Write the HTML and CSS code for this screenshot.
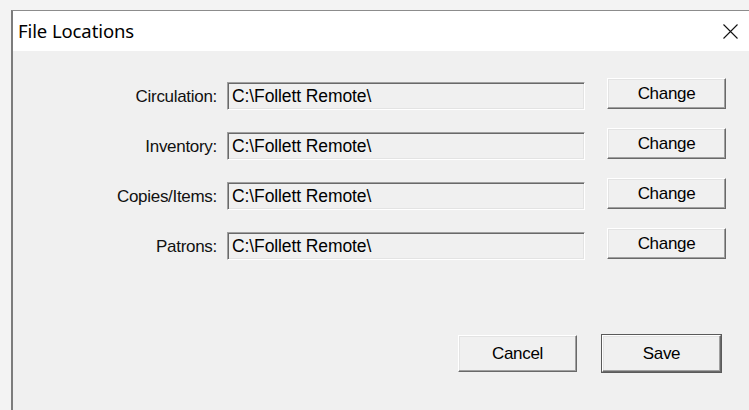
FILE: index.html
```html
<!DOCTYPE html>
<html>
<head>
<meta charset="utf-8">
<title>File Locations</title>
<link rel="stylesheet" href="styles.css">
</head>
<body>
<div class="window">
  <div class="titlebar">
    <span class="title">File Locations</span>
    <svg class="close" width="15" height="15" viewBox="0 0 15 15">
      <path d="M0.5 0.5 L14.5 14.5 M14.5 0.5 L0.5 14.5" stroke="#111" stroke-width="1.1" fill="none"/>
    </svg>
  </div>
  <div class="client">
    <div class="fields">
      <label class="label">Circulation:</label>
      <div class="path">C:\Follett Remote\</div>
      <button class="btn change">Change</button>

      <label class="label">Inventory:</label>
      <div class="path">C:\Follett Remote\</div>
      <button class="btn change">Change</button>

      <label class="label">Copies/Items:</label>
      <div class="path">C:\Follett Remote\</div>
      <button class="btn change">Change</button>

      <label class="label">Patrons:</label>
      <div class="path">C:\Follett Remote\</div>
      <button class="btn change">Change</button>
    </div>
    <div class="actions">
      <button class="btn action">Cancel</button>
      <button class="btn action default">Save</button>
    </div>
  </div>
</div>
</body>
</html>
```

FILE: styles.css
```css
html, body {
  margin: 0;
  padding: 0;
  overflow: hidden;
}

body {
  width: 749px;
  height: 410px;
  background: #f3f3f3;
  font-family: "Liberation Sans", Arial, sans-serif;
  color: #000;
}

.window {
  margin: 10px 0 0 11px;
  width: 738px;
  height: 400px;
  box-sizing: border-box;
  border-top: 1px solid #8c8c8c;
  border-left: 2px solid #7c7c7c;
  background: #f0f0f0;
  display: flex;
  flex-direction: column;
}

.titlebar {
  height: 40px;
  background: #fff;
  display: flex;
  align-items: center;
  justify-content: space-between;
  padding: 0 11px 0 5px;
  flex: none;
}

.title {
  font-family: "Noto Sans", "Open Sans", sans-serif;
  font-size: 18.5px;
  color: #000;
  padding-bottom: 1px;
  letter-spacing: -0.1px;
}

.close {
  display: block;
  margin-top: 1px;
}

.client {
  flex: 1;
  padding-top: 26px;
}

.fields {
  display: grid;
  grid-template-columns: 214px 358px 141px;
  grid-auto-rows: 31px;
  row-gap: 19px;
  align-items: start;
}

.label {
  font-size: 17px;
  letter-spacing: -0.3px;
  text-align: right;
  padding-right: 10px;
  line-height: 28px;
  margin-top: 6px;
  color: #111;
}

.path {
  height: 28px;
  margin-top: 5px;
  box-sizing: border-box;
  border: 1px solid;
  border-color: #a0a0a0 #fff #fff #a0a0a0;
  box-shadow: inset 1px 1px 0 #696969, inset -1px -1px 0 #e3e3e3;
  background: #f0f0f0;
  font-size: 17.5px;
  letter-spacing: -0.1px;
  line-height: 26px;
  padding-left: 4px;
  white-space: nowrap;
  overflow: hidden;
}

.btn {
  font-family: "Liberation Sans", Arial, sans-serif;
  font-size: 17px;
  letter-spacing: -0.3px;
  color: #000;
  background: #f0f0f0;
  border: 1px solid;
  border-color: #fff #696969 #696969 #fff;
  box-shadow: inset -1px -1px 0 #a0a0a0, inset 1px 1px 0 #e3e3e3;
  border-radius: 0;
  padding: 0;
  margin: 0;
  box-sizing: border-box;
}

.change {
  width: 119px;
  height: 31px;
  justify-self: end;
  margin-top: 1px;
}

.actions {
  display: flex;
  justify-content: flex-end;
  gap: 25px;
  padding-right: 28px;
  margin-top: 77px;
}

.action {
  width: 119px;
  height: 37px;
}

.default {
  outline: 1px solid #5a5a5a;
  outline-offset: 0;
}
```
